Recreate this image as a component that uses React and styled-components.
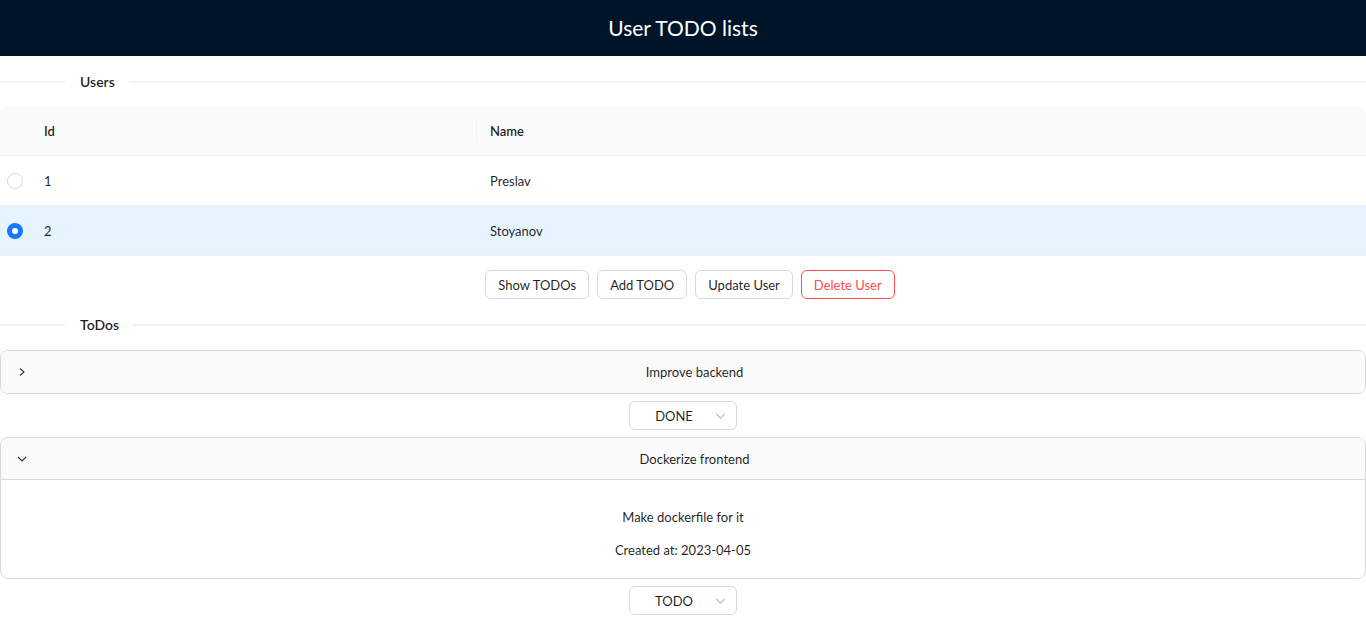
import React, { useState } from "react";
import styled, { createGlobalStyle } from "styled-components";

const GlobalStyle = createGlobalStyle`
  body {
    margin: 0;
    font-family: "Segoe UI", Lato, "Noto Sans", sans-serif;
    font-size: 13px;
    color: rgba(0, 0, 0, 0.88);
    background: #fff;
  }
  * { box-sizing: border-box; }
`

const Header = styled.header`
  height: 56px;
  background-color: #001529;
  display: flex;
  justify-content: center;
  align-items: center;
`
const Title = styled.h1`
  margin: 0 0 2px;
  color: white;
  font-size: 21px;
  font-weight: 400;
`

const Divider = styled.div`
  display: flex;
  align-items: center;
  margin: ${(p) => p.margin || "15px 0 14px"};
  line-height: 22px;
  &::before, &::after {
    content: "";
    height: 2px;
    background: #f3f3f3;
  }
  &::before { width: 65px; }
  &::after { flex: 1; }
`
const DividerText = styled.span`
  padding: 0 14px 0 15px;
  font-size: 14px;
  font-weight: 600;
`

const Table = styled.table`
  width: 100%;
  border-collapse: separate;
  border-spacing: 0;
`
const Th = styled.th`
  position: relative;
  height: 49px;
  padding: 0 14px 0 ${(p) => p.pl || 14}px;
  background: #fafafa;
  text-align: left;
  font-weight: 600;
  border-bottom: 1px solid #f0f0f0;
  width: ${(p) => p.w || "auto"};
  &:first-child { border-top-left-radius: 8px; }
  &:last-child { border-top-right-radius: 8px; }
  &.sep::before {
    content: "";
    position: absolute;
    left: 0;
    top: 50%;
    transform: translateY(-50%);
    width: 1px;
    height: 22px;
    background: #f0f0f0;
  }
`
const Td = styled.td`
  height: 50px;
  padding: 0 14px 0 ${(p) => p.pl || 14}px;
  border-bottom: 1px solid #f0f0f0;
  background: ${(p) => (p.selected ? "#e6f4ff" : "#fff")};
`
const SelCell = styled(Td)`
  padding: 0;
  width: 30px;
  text-align: center;
`
const SelHead = styled(Th)`
  padding: 0;
  width: 30px;
`
const Radio = styled.span`
  display: inline-block;
  vertical-align: middle;
  width: 16px;
  height: 16px;
  border-radius: 50%;
  border: ${(p) => (p.checked ? "5px solid #1677ff" : "1px solid #d9d9d9")};
  background: #fff;
  cursor: pointer;
`

const Actions = styled.div`
  display: flex;
  justify-content: center;
  gap: 8px;
  margin-top: 14px;
  padding-left: 14px;
`
const Button = styled.button`
  height: 29px;
  padding: 0 12px;
  font: inherit;
  background: #fff;
  border-radius: 6px;
  border: 1px solid ${(p) => (p.danger ? "#ff4d4f" : "#d9d9d9")};
  color: ${(p) => (p.danger ? "#ff4d4f" : "rgba(0,0,0,0.88)")};
  cursor: pointer;
`

const Panel = styled.div`
  border: 1px solid #d9d9d9;
  border-radius: 8px;
  overflow: hidden;
`
const PanelHead = styled.div`
  height: 42px;
  display: flex;
  align-items: center;
  padding: 0 16px 0 15px;
  background: #fafafa;
  border-bottom: ${(p) => (p.open ? "1px solid #d9d9d9" : "none")};
  cursor: pointer;
`
const Arrow = styled.span`
  display: flex;
  width: 12px;
  margin-right: 12px;
  justify-content: center;
`
const PanelTitle = styled.span`
  flex: 1;
  text-align: center;
`
const PanelBody = styled.div`
  padding: 16px;
  text-align: center;
  p { margin: 11px 0 13px; line-height: 20px; }
  p:last-child { margin-bottom: 2px; }
`

const SelectRow = styled.div`
  display: flex;
  justify-content: center;
  padding: 7px 0 7px;
`
const Select = styled.div`
  position: relative;
  width: 108px;
  height: 29px;
  border: 1px solid #d9d9d9;
  border-radius: 6px;
  padding: 0 29px 0 11px;
  display: flex;
  align-items: center;
  justify-content: center;
`
const SelectArrow = styled.span`
  position: absolute;
  right: 10px;
  top: 50%;
  transform: translateY(-50%);
  display: flex;
`

const Chevron = ({ dir, color = "#333", size = 10 }) => (
  <svg width={size} height={size} viewBox="0 0 10 10" fill="none">
    {dir === "right" ? (
      <path d="M3 1.5 L7 5 L3 8.5" stroke={color} strokeWidth="1.1" />
    ) : (
      <path d="M1 3 L5 7 L9 3" stroke={color} strokeWidth="1.1" />
    )}
  </svg>
)

const users = [
  { id: 1, name: "Preslav" },
  { id: 2, name: "Stoyanov" },
]

const todos = [
  { title: "Improve backend", status: "DONE", open: false },
  {
    title: "Dockerize frontend",
    status: "TODO",
    open: true,
    desc: "Make dockerfile for it",
    created: "2023-04-05",
  },
]

export default function App() {
  const [selected, setSelected] = useState(2)
  return (
    <>
      <GlobalStyle />
      <Header>
        <Title>User TODO lists</Title>
      </Header>

      <Divider>
        <DividerText>Users</DividerText>
      </Divider>
      <Table>
        <thead>
          <tr>
            <SelHead />
            <Th pl={14} w="446px">Id</Th>
            <Th className="sep">Name</Th>
          </tr>
        </thead>
        <tbody>
          {users.map((u) => (
            <tr key={u.id} onClick={() => setSelected(u.id)}>
              <SelCell selected={selected === u.id}>
                <Radio checked={selected === u.id} />
              </SelCell>
              <Td selected={selected === u.id}>{u.id}</Td>
              <Td selected={selected === u.id}>{u.name}</Td>
            </tr>
          ))}
        </tbody>
      </Table>
      <Actions>
        <Button>Show TODOs</Button>
        <Button>Add TODO</Button>
        <Button>Update User</Button>
        <Button danger>Delete User</Button>
      </Actions>

      <Divider margin="15px 0 14px">
        <DividerText>ToDos</DividerText>
      </Divider>
      {todos.map((t) => (
        <div key={t.title}>
          <Panel>
            <PanelHead open={t.open}>
              <Arrow>
                <Chevron dir={t.open ? "down" : "right"} />
              </Arrow>
              <PanelTitle>{t.title}</PanelTitle>
            </PanelHead>
            {t.open && (
              <PanelBody>
                <p>{t.desc}</p>
                <p>Created at: {t.created}</p>
              </PanelBody>
            )}
          </Panel>
          <SelectRow>
            <Select>
              {t.status}
              <SelectArrow>
                <Chevron dir="down" color="#bfbfbf" size={11} />
              </SelectArrow>
            </Select>
          </SelectRow>
        </div>
      ))}
    </>
  )
}
